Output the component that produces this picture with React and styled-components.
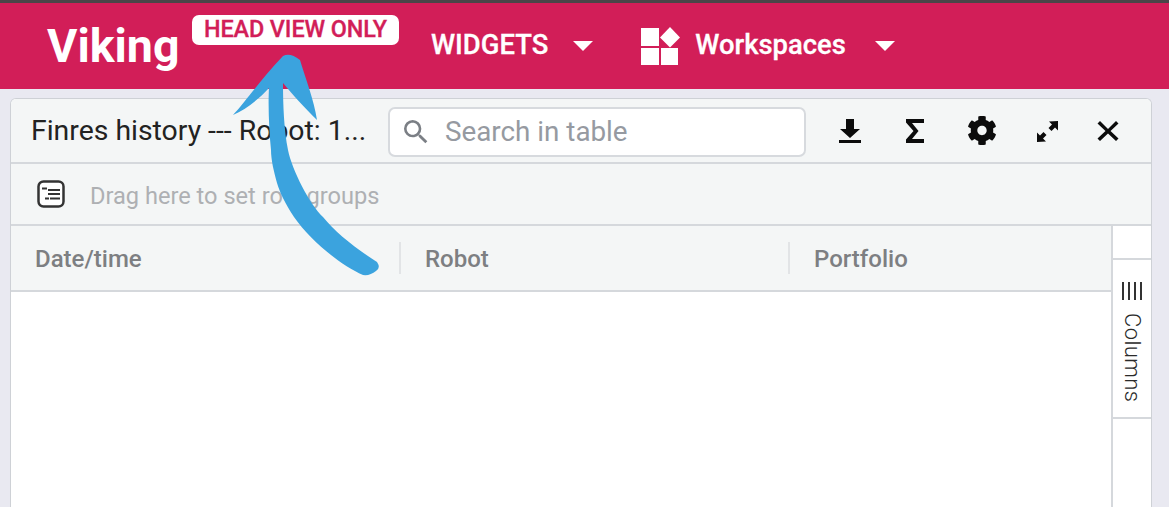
import React from 'react'
import styled, { createGlobalStyle } from 'styled-components'
import { FaCog } from 'react-icons/fa'
import { MdSearch } from 'react-icons/md'

const GlobalStyle = createGlobalStyle`
    html, body {
        margin: 0;
        height: 507px;
        overflow: hidden;
        background: #e9e9f1;
        font-family: Roboto, "Liberation Sans", sans-serif;
    }
`

const Page = styled.div`
    position: relative;
    width: 1169px;
    height: 507px;
    overflow: hidden;
    border-top: 3px solid #4a4548;
    box-sizing: border-box;
`

const TopBar = styled.header`
    height: 86px;
    background: #d21e58;
    display: flex;
    align-items: center;
    padding-left: 47px;
    color: #fff;
`

const Logo = styled.div`
    font-size: 46.5px;
    font-weight: 700;
    line-height: 1;
    width: 145px;
    flex-shrink: 0;
`

const Badge = styled.div`
    width: 207px;
    height: 30px;
    margin-top: -33px;
    background: #fff;
    color: #d21e58;
    border-radius: 7px;
    font-size: 23.4px;
    font-weight: 500;
    line-height: 28px;
    text-align: center;
    letter-spacing: -0.1px;
    -webkit-text-stroke: 0.3px #d21e58;
`

const NavItem = styled.div`
    display: flex;
    align-items: center;
    font-size: 27.4px;
    font-weight: 500;
    margin-left: ${p => p.$left}px;
    margin-top: -2px;
    -webkit-text-stroke: 0.3px #fff;
`

const Caret = styled.span`
    width: 0;
    height: 0;
    border-left: 10.5px solid transparent;
    border-right: 10.5px solid transparent;
    border-top: 10px solid #fff;
    margin-left: ${p => p.$left}px;
    margin-top: 2px;
`

const NavIcon = styled.svg`
    width: 40px;
    height: 40px;
    margin-right: 15px;
`

const Card = styled.section`
    margin: 9px 17px 0 10px;
    height: 420px;
    background: #fff;
    border: 1px solid #ced1d6;
    border-bottom: 0;
    border-radius: 6px 6px 0 0;
    overflow: hidden;
`

const Toolbar = styled.div`
    height: 63px;
    background: #f4f6f6;
    border-bottom: 2px solid #d5d8dc;
    display: flex;
    align-items: center;
    padding-left: 20px;
`

const Title = styled.div`
    width: 357px;
    font-size: 28.4px;
    color: #222;
    white-space: nowrap;
`

const SearchBox = styled.div`
    width: 418px;
    height: 50px;
    box-sizing: border-box;
    background: #fff;
    border: 2px solid #d7dade;
    border-radius: 7px;
    display: flex;
    align-items: center;
    padding-left: 10px;
    color: #7b7f85;
    margin-top: 2px;
`

const Placeholder = styled.span`
    font-size: 27.8px;
    color: #969aa1;
    margin-left: 13px;
`

const IconButton = styled.div`
    width: 30px;
    height: 30px;
    display: flex;
    align-items: center;
    justify-content: center;
    margin-left: ${p => p.$left}px;
    color: #0c0c0c;
    font-size: 31px;
`

const GroupBar = styled.div`
    height: 60px;
    background: #f4f6f6;
    border-bottom: 2px solid #d5d8dc;
    display: flex;
    align-items: center;
    padding-left: 26px;
`

const GroupText = styled.span`
    font-size: 23.6px;
    color: #aeb0b3;
    margin-left: 25px;
    margin-top: 4px;
`

const Body = styled.div`
    display: flex;
    height: 291px;
`

const Grid = styled.div`
    width: 1102px;
    flex-shrink: 0;
    border-right: 2px solid #d5d8dc;
    box-sizing: border-box;
`

const HeaderRow = styled.div`
    height: 64px;
    background: #f4f6f6;
    border-bottom: 2px solid #d5d8dc;
    display: flex;
    align-items: center;
`

const HeaderCell = styled.div`
    width: ${p => p.$width}px;
    flex-shrink: 0;
    height: 32px;
    box-sizing: border-box;
    padding-left: 24px;
    font-size: 24px;
    font-weight: 500;
    line-height: 34px;
    color: #7d7f82;
    border-right: ${p => (p.$last ? 0 : '2px solid #e2e4e6')};
`

const SidePanel = styled.aside`
    flex: 1;
    padding-top: 32px;
`

const ColumnsTab = styled.div`
    height: 161px;
    box-sizing: border-box;
    border-top: 2px solid #d5d8dc;
    border-bottom: 2px solid #d5d8dc;
    display: flex;
    flex-direction: column;
    align-items: center;
    padding-top: 21px;
    color: #2a2a2a;
`

const ColumnsLabel = styled.span`
    writing-mode: vertical-rl;
    font-size: 22px;
    font-weight: 300;
    line-height: 22px;
    margin-top: 12px;
    letter-spacing: 0.4px;
`

const ArrowOverlay = styled.svg`
    position: absolute;
    left: 0;
    top: -3px;
    width: 1169px;
    height: 507px;
    pointer-events: none;
`

const Icon = ({ size = 30, children }) => (
    <svg width={size} height={size} viewBox="0 0 30 30" fill="currentColor">{children}</svg>
)

export default function App() {
    return (
        <Page>
            <GlobalStyle />
            <TopBar>
                <Logo>Viking</Logo>
                <Badge>HEAD VIEW ONLY</Badge>
                <NavItem $left={32}>
                    WIDGETS
                    <Caret $left={25} />
                </NavItem>
                <NavItem $left={47}>
                    <NavIcon viewBox="0 0 40 40" fill="#fff">
                        <rect x="1" y="3" width="18" height="18" />
                        <rect x="1" y="23" width="18" height="17" />
                        <rect x="21" y="23" width="17" height="17" />
                        <polygon points="30,2 40,12.500 30,22.500 20,12.500" />
                    </NavIcon>
                    Workspaces
                    <Caret $left={29} />
                </NavItem>
            </TopBar>
            <Card>
                <Toolbar>
                    <Title>Finres history --- Robot: 1...</Title>
                    <SearchBox>
                        <MdSearch size={32} />
                        <Placeholder>Search in table</Placeholder>
                    </SearchBox>
                    <IconButton $left={29}>
                        <Icon>
                            <path d="M11 3h8v10h6L15 22 5 13h6z" />
                            <rect x="4" y="24" width="22" height="3" />
                        </Icon>
                    </IconButton>
                    <IconButton $left={35}>
                        <Icon>
                            <path d="M6 3h18v4H12l6.500 8-6.500 8h12v4H6v-3.500L13.500 15 6 6.500z" />
                        </Icon>
                    </IconButton>
                    <IconButton $left={37}>
                        <FaCog />
                    </IconButton>
                    <IconButton $left={35}>
                        <Icon>
                            <path d="M26 5v9.500l-3-3-3.500 3.500-3-3 3.500-3.500-3-3zM5 26v-9.500l3 3 3.500-3.500 3 3-3.500 3.500 3 3z" />
                        </Icon>
                    </IconButton>
                    <IconButton $left={31}>
                        <Icon>
                            <path d="M7 5l8 8 8-8 2.500 2.500-8 7.500 8 7.500L23 25l-8-7.500L7 25l-2.500-2.500 8-7.500-8-7.500z" />
                        </Icon>
                    </IconButton>
                </Toolbar>
                <GroupBar>
                    <svg width="28" height="28" viewBox="0 0 28 28" fill="none" stroke="#333">
                        <rect x="1.500" y="1.500" width="25" height="25" rx="5" strokeWidth="2.500" fill="#fff" />
                        <path d="M5 8.500h5M11 10h12M11 14h12M8 18.500h4M13 18.500h10" strokeWidth="2" />
                    </svg>
                    <GroupText>Drag here to set row groups</GroupText>
                </GroupBar>
                <Body>
                    <Grid>
                        <HeaderRow>
                            <HeaderCell $width={390}>Date/time</HeaderCell>
                            <HeaderCell $width={389}>Robot</HeaderCell>
                            <HeaderCell $width={321} $last>Portfolio</HeaderCell>
                        </HeaderRow>
                    </Grid>
                    <SidePanel>
                        <ColumnsTab>
                            <svg width="22" height="20" viewBox="0 0 22 20" stroke="#333" strokeWidth="2">
                                <path d="M2 1v18M8 1v18M14 1v18M20 1v18" />
                            </svg>
                            <ColumnsLabel>Columns</ColumnsLabel>
                        </ColumnsTab>
                    </SidePanel>
                </Body>
            </Card>
            <ArrowOverlay viewBox="0 0 1169 507">
                <path
                    fill="#3ba3de"
                    d="M233 115C245 102 262 78 283 56Q290 52 300 60C306 80 314 100 317 120C305 108 292 94 283 83C283 105 284 130 288 150C292 170 310 205 323 217C335 232 355 248 377 262Q381 268 376 271Q370 276 363 275C340 265 310 240 294 217C285 203 280 193 277 183C274 172 271 160 271 150C269 130 268 105 269 88C258 100 245 110 233 115Z"
                />
            </ArrowOverlay>
        </Page>
    )
}
